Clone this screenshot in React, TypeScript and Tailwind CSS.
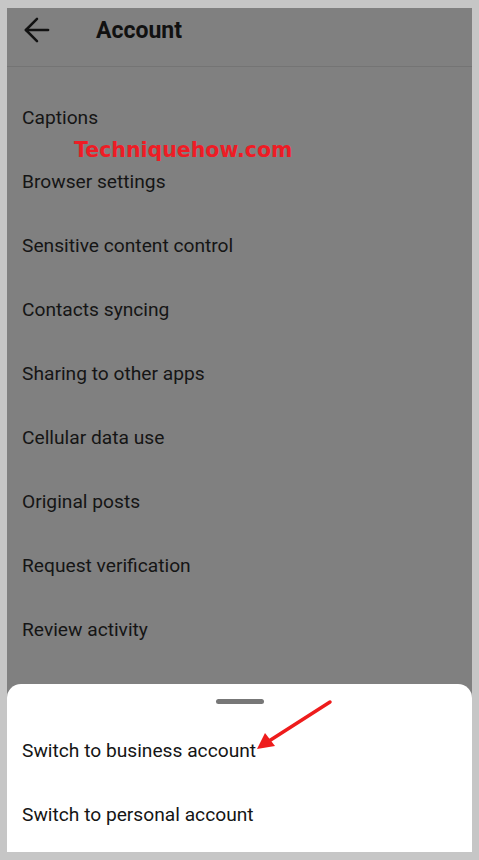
import { ArrowLeft } from "lucide-react";

const items = [
  "Captions",
  "Browser settings",
  "Sensitive content control",
  "Contacts syncing",
  "Sharing to other apps",
  "Cellular data use",
  "Original posts",
  "Request verification",
  "Review activity",
];

export default function App() {
  return (
    <div className="h-[860px] w-[479px] bg-[#c6c6c6] px-[7px] py-[8px]" style={{ fontFamily: "Roboto, sans-serif" }}>
      <div className="relative flex h-full flex-col overflow-hidden bg-[#808080]">
        {/* header */}
        <div className="flex h-[59px] items-start border-b border-[#747474] pl-[11px] pt-[3px]">
          <ArrowLeft className="h-[38px] w-[38px] text-[#111]" strokeWidth={1.6} />
          <span className="ml-[40px] mt-[3px] text-[23px] font-bold text-[#111]">Account</span>
        </div>

        <div className="pt-[19px]">
          {items.map((t) => (
            <div key={t} className="flex h-[64px] items-center pl-[15px] text-[19.2px] text-[#151515]">
              {t}
            </div>
          ))}
        </div>

        {/* watermark */}
        <div
          className="absolute left-[67px] top-[127px] text-[20.5px] font-bold text-[#ee1c25]"
          style={{ fontFamily: "'DejaVu Sans', Verdana, sans-serif" }}
        >
          Techniquehow.com
        </div>

        {/* bottom sheet */}
        <div className="mt-auto h-[168px] rounded-t-[14px] bg-white">
          <div className="flex justify-center pt-[15px]">
            <div className="h-[5px] w-[48px] rounded-full bg-[#777]" />
          </div>
          <div className="pt-[15px]">
            <div className="flex h-[64px] items-center pl-[15px] text-[19.2px] text-[#151515]">Switch to business account</div>
            <div className="flex h-[64px] items-center pl-[15px] text-[19.2px] text-[#151515]">Switch to personal account</div>
          </div>
        </div>

        {/* annotation arrow */}
        <svg className="pointer-events-none absolute left-0 top-0" width="465" height="844">
          <line x1="323" y1="694" x2="262" y2="733" stroke="#ee1c1c" strokeWidth="3.5" strokeLinecap="round" />
          <polygon points="250,741 258,725 268,738" fill="#ee1c1c" />
        </svg>
      </div>
    </div>
  );
}
